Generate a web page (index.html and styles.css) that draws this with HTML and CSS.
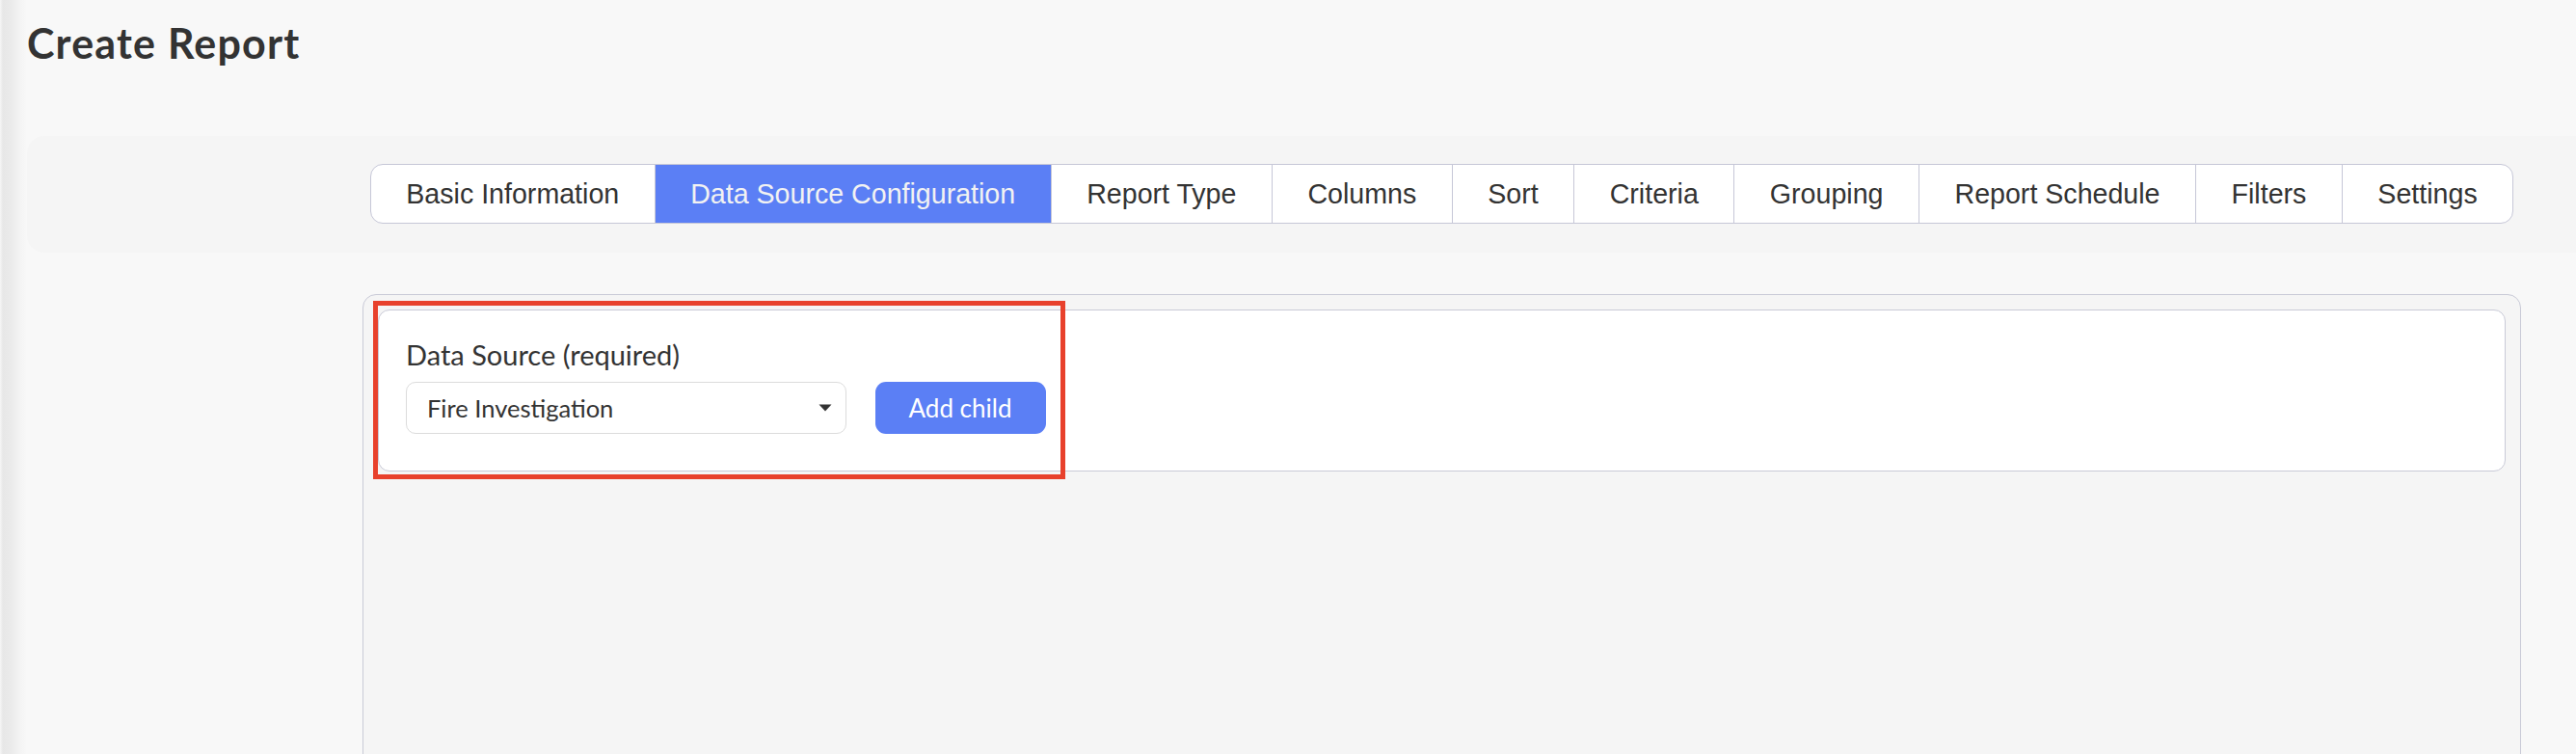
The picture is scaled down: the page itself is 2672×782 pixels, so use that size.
FILE: index.html
```html
<!DOCTYPE html>
<html lang="en">
<head>
<meta charset="utf-8">
<title>Create Report</title>
<link rel="stylesheet" href="styles.css">
</head>
<body>
<div class="app">
  <div class="edge"></div>
  <div class="main">
    <h1 class="page-title">Create Report</h1>
    <div class="tab-band">
      <nav class="tabs">
        <div class="tab">Basic Information</div>
        <div class="tab active">Data Source Configuration</div>
        <div class="tab">Report Type</div>
        <div class="tab">Columns</div>
        <div class="tab">Sort</div>
        <div class="tab">Criteria</div>
        <div class="tab">Grouping</div>
        <div class="tab">Report Schedule</div>
        <div class="tab">Filters</div>
        <div class="tab">Settings</div>
      </nav>
    </div>
    <div class="content-row">
      <div class="panel">
        <div class="card">
          <div class="field-label">Data Source (required)</div>
          <div class="field-row">
            <div class="select">
              <span class="select-value">Fire Investigation</span>
              <svg class="caret" width="14" height="8" viewBox="0 0 14 8"><path d="M0.5 0.5 L13.5 0.5 L7 7.5 Z" fill="#333"/></svg>
            </div>
            <button class="btn-primary" type="button">Add child</button>
          </div>
        </div>
        <div class="highlight"></div>
      </div>
    </div>
  </div>
</div>
</body>
</html>
```
FILE: styles.css
```css
html, body {
  margin: 0;
  padding: 0;
  height: 100%;
  overflow: hidden;
  background: #f8f8f8;
}

.app {
  display: flex;
  height: 100vh;
  overflow: hidden;
  background: #f8f8f8;
}

.edge {
  flex: 0 0 28px;
  background: linear-gradient(to right, #f6f6f6 0, #e7e7e7 3px, #ebebeb 12px, #f3f3f3 20px, #f8f8f8 28px);
}

.main {
  flex: 1;
  min-width: 0;
}

.page-title {
  margin: 19px 0 0 0;
  font-family: "Lato", "Liberation Sans", sans-serif;
  font-weight: 700;
  font-size: 43px;
  letter-spacing: 1.2px;
  line-height: 1.2;
  color: #333333;
}

.tab-band {
  margin-top: 70px;
  height: 121px;
  box-sizing: border-box;
  padding: 0 57px 0 348px;
  background: #f5f5f5;
  border-radius: 18px 0 0 18px;
  display: flex;
  align-items: center;
  justify-content: center;
}

.tabs {
  display: flex;
  height: 62px;
  box-sizing: border-box;
  border: 1px solid #c6c7d7;
  border-radius: 13px;
  overflow: hidden;
  background: #ffffff;
}

.tab {
  display: flex;
  align-items: center;
  padding: 0 36.5px;
  font-family: "Liberation Sans", Arial, sans-serif;
  font-size: 28.6px;
  color: #333333;
  white-space: nowrap;
  border-left: 1px solid #c6c7d7;
}

.tab:first-child {
  border-left: none;
}

.tab.active {
  background: #5b7ff5;
  color: #f2f2f2;
}

.content-row {
  margin-top: 43px;
  padding: 0 57px 0 348px;
}

.panel {
  position: relative;
  min-height: 560px;
  border: 1px solid #c9cad7;
  border-radius: 14px 14px 0 0;
  background: #f5f5f5;
  padding: 15px;
}

.card {
  background: #ffffff;
  border: 1px solid #c9cad7;
  border-radius: 12px;
  padding: 29px 28px 38px 28px;
}

.field-label {
  font-family: "Lato", "Liberation Sans", sans-serif;
  font-size: 29px;
  line-height: 1.2;
  color: #333333;
  margin-bottom: 10.5px;
}

.field-row {
  display: flex;
  align-items: center;
  gap: 29.5px;
}

.select {
  width: 457px;
  height: 54px;
  box-sizing: border-box;
  border: 1px solid #dcdcdc;
  border-radius: 10px;
  background: #ffffff;
  padding: 0 14px 0 21px;
  display: flex;
  align-items: center;
  justify-content: space-between;
}

.select-value {
  font-family: "Lato", "Liberation Sans", sans-serif;
  font-size: 25.5px;
  color: #333333;
}

.caret {
  display: block;
}

.btn-primary {
  width: 177px;
  height: 54px;
  border: none;
  border-radius: 11px;
  background: #5b7ff5;
  color: #ffffff;
  font-family: "Lato", "Liberation Sans", sans-serif;
  font-size: 26px;
  padding: 0;
  cursor: pointer;
}

.highlight {
  position: absolute;
  left: 10px;
  top: 6px;
  width: 718px;
  height: 185px;
  box-sizing: border-box;
  border: 5px solid #e8412c;
  pointer-events: none;
}
```
